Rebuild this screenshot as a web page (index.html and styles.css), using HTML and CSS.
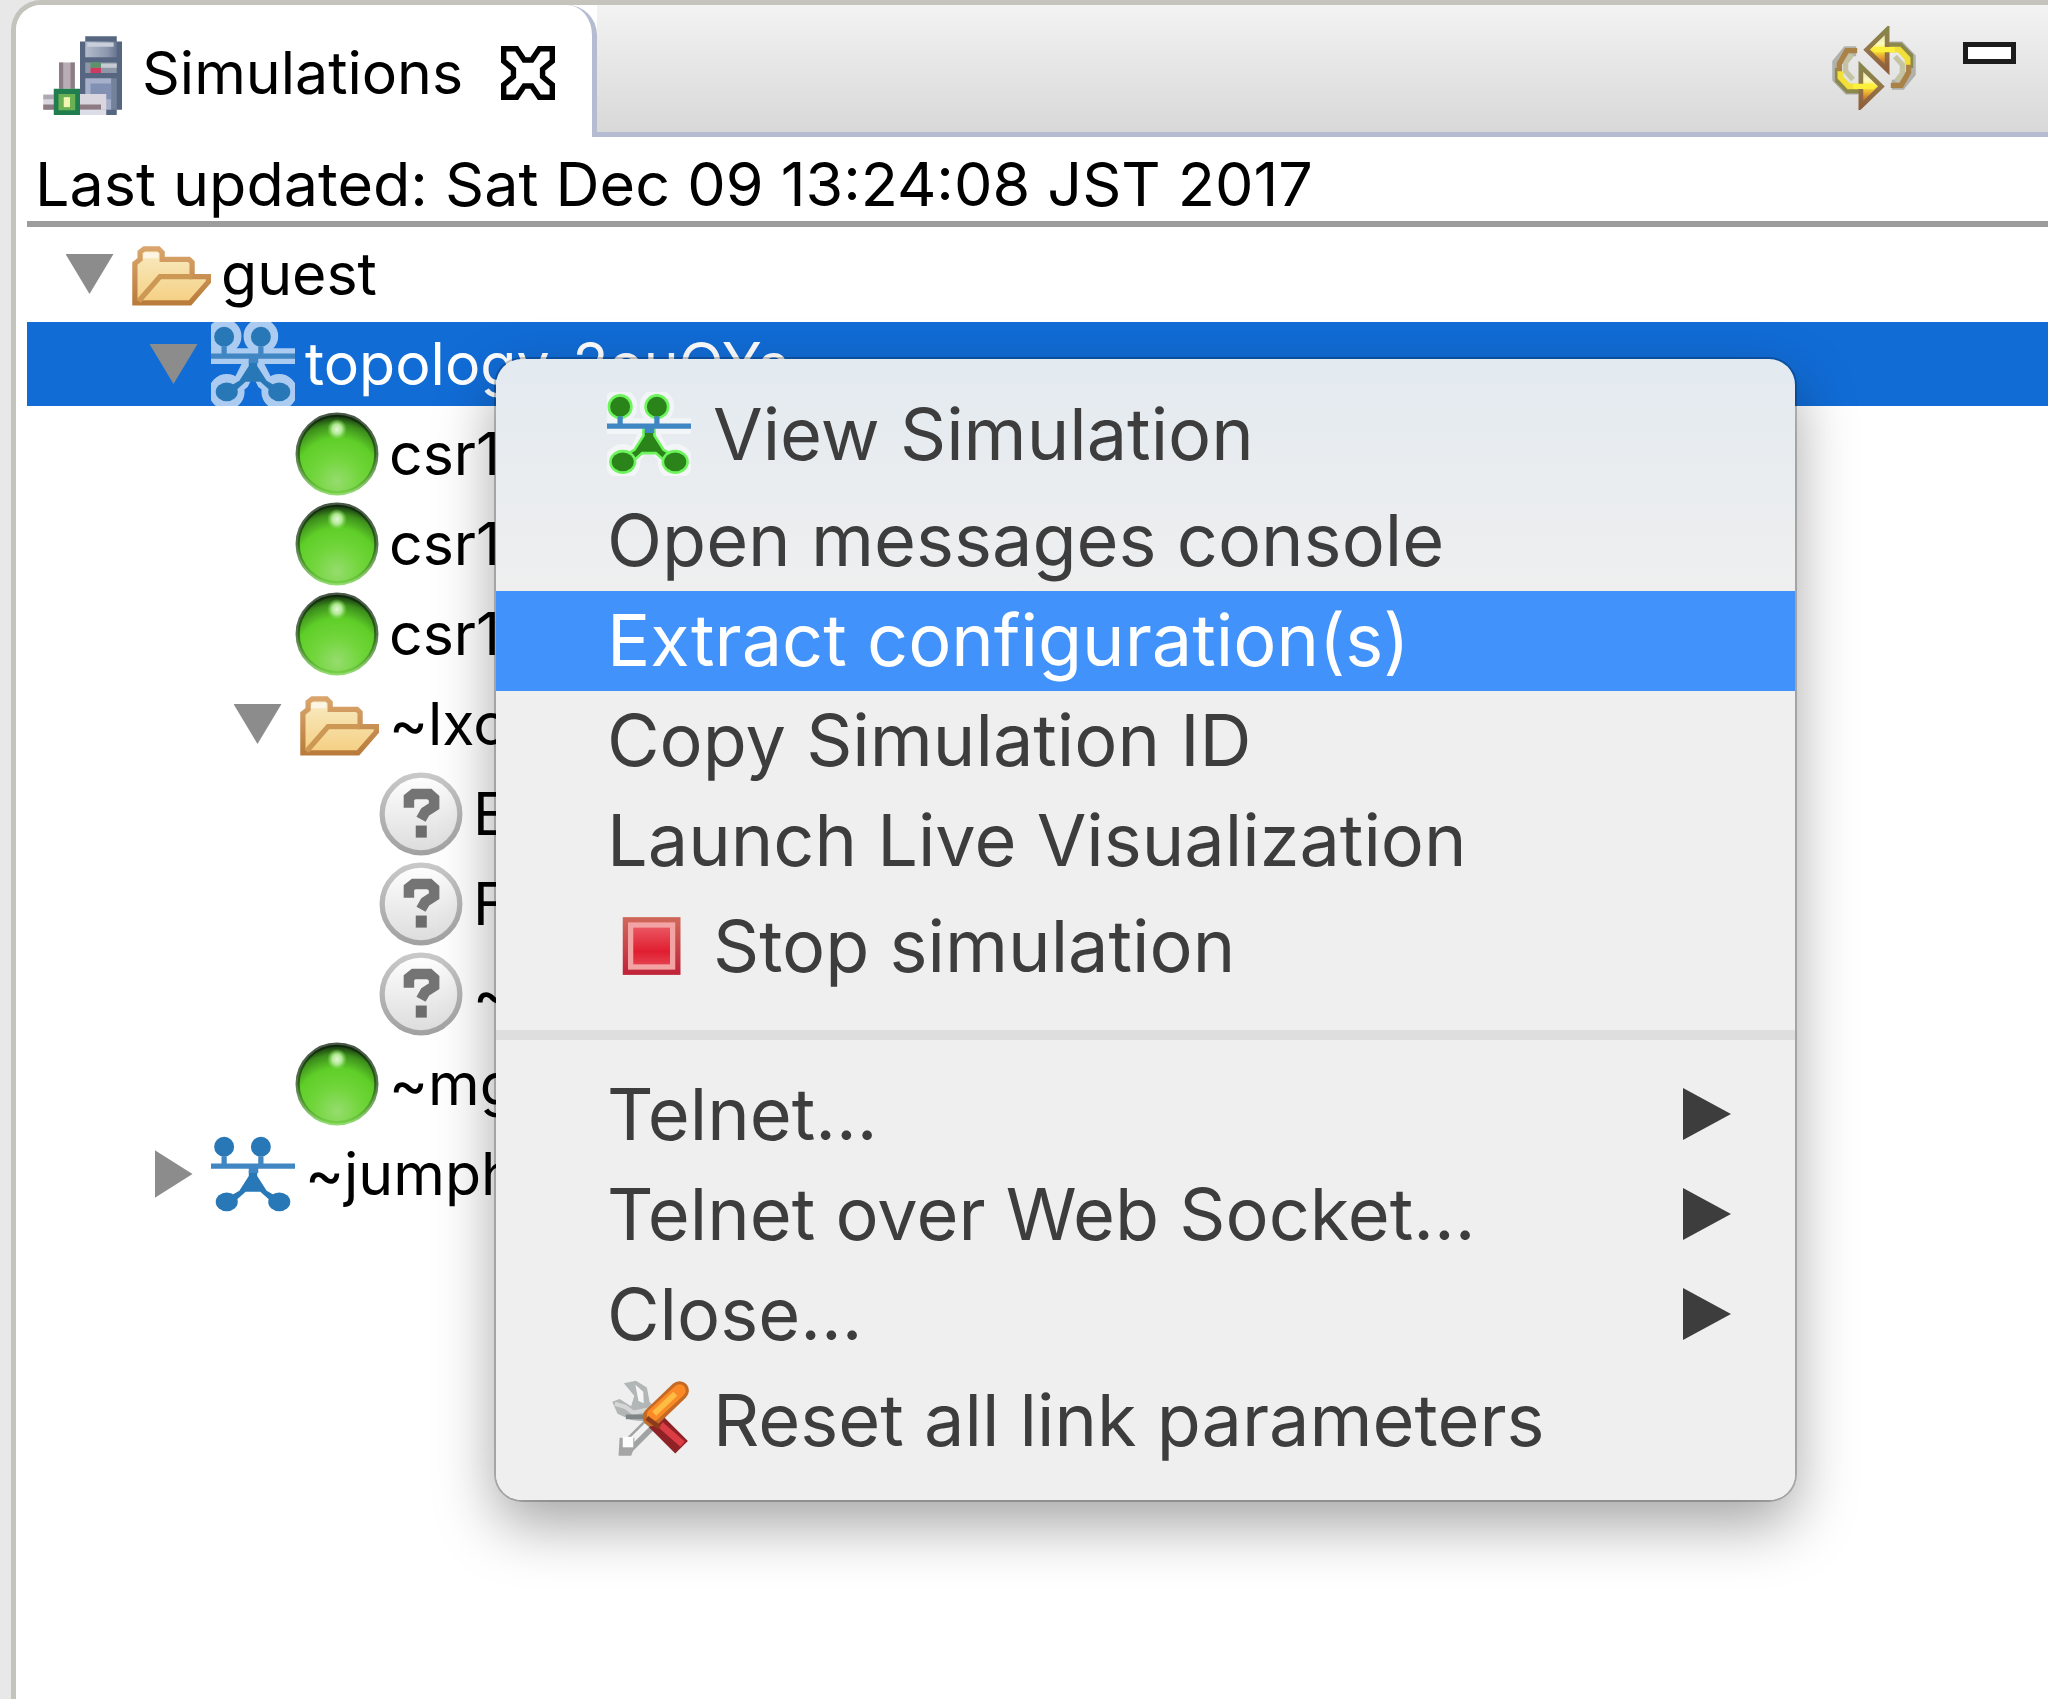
FILE: index.html
```
<!DOCTYPE html>
<html lang="en">
<head>
  <meta charset="UTF-8" />
  <title>Simulations</title>
  <link rel="stylesheet" href="styles.css">
</head>
<body>

  <!-- shared icons -->
  <svg class="sprite" aria-hidden="true">
    <defs>
      <radialGradient id="ballFill" cx="0.5" cy="0.85" r="0.85">
        <stop offset="0" stop-color="#96dc6e" />
        <stop offset="0.35" stop-color="#72d63c" />
        <stop offset="0.65" stop-color="#5fce28" />
        <stop offset="0.85" stop-color="#3d8f1c" />
        <stop offset="1" stop-color="#10280c" />
      </radialGradient>
      <radialGradient id="ballShine">
        <stop offset="0" stop-color="#e4f8d8" />
        <stop offset="0.5" stop-color="#aee890" />
        <stop offset="1" stop-color="#7fdc55" stop-opacity="0" />
      </radialGradient>
      <linearGradient id="ballEdge" x1="0" y1="0" x2="0" y2="1">
        <stop offset="0" stop-color="#0c200a" />
        <stop offset="0.5" stop-color="#1f4a14" />
        <stop offset="1" stop-color="#6fce42" />
      </linearGradient>
      <linearGradient id="grayFill" x1="0" y1="0" x2="0" y2="1">
        <stop offset="0" stop-color="#ffffff" />
        <stop offset="1" stop-color="#dcdcdc" />
      </linearGradient>
      <linearGradient id="grayEdge" x1="0" y1="0" x2="0" y2="1">
        <stop offset="0" stop-color="#c8c8c8" />
        <stop offset="1" stop-color="#a2a2a2" />
      </linearGradient>
      <linearGradient id="folderFill" x1="0" y1="0" x2="0" y2="1">
        <stop offset="0" stop-color="#f8ecc4" />
        <stop offset="1" stop-color="#f5cf82" />
      </linearGradient>
      <linearGradient id="folderEdge" x1="0" y1="0" x2="0" y2="1">
        <stop offset="0" stop-color="#d9a56c" />
        <stop offset="1" stop-color="#b97c3c" />
      </linearGradient>
      <linearGradient id="stopEdge" x1="0" y1="0" x2="0" y2="1">
        <stop offset="0" stop-color="#d0695a" />
        <stop offset="1" stop-color="#c02238" />
      </linearGradient>
      <linearGradient id="stopFill" x1="0" y1="0" x2="0" y2="1">
        <stop offset="0" stop-color="#ea5560" />
        <stop offset="0.65" stop-color="#e01e30" />
        <stop offset="1" stop-color="#e4404e" />
      </linearGradient>
      <linearGradient id="towerFill" x1="0" y1="0" x2="1" y2="0">
        <stop offset="0" stop-color="#b4bccd" />
        <stop offset="0.7" stop-color="#8c96ad" />
        <stop offset="1" stop-color="#69758f" />
      </linearGradient>
      <linearGradient id="arrowFill" x1="0" y1="0" x2="0" y2="1">
        <stop offset="0" stop-color="#d8d8a0" />
        <stop offset="0.35" stop-color="#fdfac0" />
        <stop offset="0.5" stop-color="#fdee3a" />
        <stop offset="0.75" stop-color="#dc8c2c" />
        <stop offset="1" stop-color="#8a5a38" />
      </linearGradient>
      <linearGradient id="arrowEdge" x1="0" y1="0" x2="0" y2="1">
        <stop offset="0" stop-color="#87864a" />
        <stop offset="0.5" stop-color="#94764a" />
        <stop offset="1" stop-color="#8f5f3c" />
      </linearGradient>
    </defs>

    <symbol id="icon-ball" viewBox="0 0 16 16">
      <circle cx="8" cy="8" r="7.5" fill="url(#ballFill)" stroke="url(#ballEdge)" stroke-width="0.8" stroke-opacity="0.75" />
      <ellipse cx="8" cy="3.3" rx="1.9" ry="2" fill="url(#ballShine)" />
    </symbol>

    <symbol id="icon-unknown" viewBox="0 0 16 16">
      <circle cx="8" cy="8" r="7.4" fill="url(#grayFill)" stroke="url(#grayEdge)" stroke-width="1" />
      <path d="M5.7 6.8V4.9L6.6 4.2H9.6L10.5 5V6.5L8.8 7.6 8 9" fill="none" stroke="#747474" stroke-width="2" />
      <path d="M7 10.2h2.1v2.3H7z" fill="#6c6c6c" />
    </symbol>

    <symbol id="icon-folder" viewBox="0 0 16 16">
      <path d="M1.5 13.5V6L2.5 5.2V3.8L3.3 3.2H6L6.7 3.9V5.2H11.8L12.4 5.8V8.5H15.5V9.5L12 13.5H1.5z" fill="url(#folderFill)" stroke="url(#folderEdge)" />
      <path d="M3.2 3.9H6V5H3z" fill="#fcf4e4" />
      <path d="M2.2 13.2L6.3 8.5H12.4" fill="none" stroke="#cc9854" />
    </symbol>

    <symbol id="icon-topology" viewBox="0 0 16 16">
      <g class="halo">
        <path d="M0 6.5H16M2.5 3V6M9.5 3V6M8 7L10.2 11.4L13 13.5M8 7L5.8 11.4L3 13.5" />
        <circle cx="2.5" cy="2.7" r="1.8" />
        <circle cx="9.5" cy="2.7" r="1.8" />
        <circle cx="3" cy="13.3" r="1.9" />
        <circle cx="13" cy="13.3" r="1.9" />
      </g>
      <g class="topo-node">
        <path d="M7.2 7.4H8.8V8.4L10.6 11.2 12 12 11 12.8 9.4 11.4H6.6L5 12.8 4 12 5.4 11.2 7.2 8.4z" />
        <circle cx="2.5" cy="2.8" r="1.9" />
        <circle cx="9.5" cy="2.8" r="1.9" />
        <ellipse cx="3" cy="13.3" rx="2.1" ry="1.8" />
        <ellipse cx="13" cy="13.3" rx="2.1" ry="1.8" />
      </g>
      <path d="M0 6h16v1H0zM2 4.6h1V6H2zM9 4.6h1V6H9zM7.2 7h1.8v0.8H7.2z" fill="#3f86c2" />
    </symbol>
  </svg>

  <main class="view">
    <header class="tab-bar">
      <div class="tab">
        <svg class="icon" viewBox="0 0 16 16" aria-hidden="true">
          <path d="M9 1h6v1h1v13h-1v1H9v-1H8V2h1z" fill="#566580" />
          <path d="M9 2h6v3H9z" fill="url(#towerFill)" />
          <path d="M9.4 2.2h5V3h-5z" fill="#c9cfdb" />
          <path d="M9 6h6v2H9z" fill="#8e97a8" />
          <path d="M12 6.2h3v0.8h-3z" fill="#c6cad2" />
          <path d="M10 6h2v1h-2z" fill="#5b9468" />
          <path d="M10 7h2v1h-2z" fill="#cf3a60" />
          <path d="M9 9h5v6H9z" fill="#a6b0ca" />
          <path d="M10 10h4v3h-4z" fill="#8290b4" />
          <path d="M14 9h1v6h-1z" fill="#75809a" />
          <path d="M4 6h3v5H4z" fill="#b8adb5" />
          <path d="M4 6h0.8v5H4zM6.2 6H7v5h-0.8z" fill="#8b7c86" />
          <path d="M1 12h12v3H1z" fill="#d9d6df" />
          <path d="M1 12.2h2V13H1z" fill="#b0a8b0" />
          <path d="M1 14h11v1H1z" fill="#8d7a82" />
          <path d="M8 15h5v1H8z" fill="#dcdde6" />
          <path d="M3 11h5v5H3z" fill="#1f7d4e" />
          <path d="M3.9 12h3.2v3.1H3.9z" fill="#6bb052" />
          <path d="M4.9 12.6h1.2v1.9H4.9z" fill="#f1f7b2" />
        </svg>
        <span class="tab-title">Simulations</span>
        <button class="tool-btn" type="button" aria-label="Close view">
          <svg class="close-icon" viewBox="0 0 10 10" aria-hidden="true">
            <path d="M0.5 0.5H2.9L4.3 2.6H5.7L7.1 0.5H9.5V2.8L7.7 4.3V5.7L9.5 7.2V9.5H7.1L5.7 7.4H4.3L2.9 9.5H0.5V7.2L2.3 5.7V4.3L0.5 2.8z" fill="#fff" stroke="#000" />
          </svg>
        </button>
      </div>
      <div class="tools">
        <button class="tool-btn" type="button" aria-label="Refresh">
          <svg class="icon" viewBox="0 0 16 16" aria-hidden="true">
            <g fill="none">
              <path d="M11 3.9H13L15 6V9L13.2 11.2H11.4M5 12.1H3L1 10V7L2.8 4.8H4.6" stroke="#9d9d98" stroke-width="1.9" stroke-opacity="0.75" />
              <path d="M12 5.8L13.4 7.4V9L12.2 10.6M4 10.2L2.6 8.6V7L3.8 5.4" stroke="#c4c4a4" stroke-width="1" />
              <path d="M10 3.7H13L14.9 5.6V8M6 12.3H3L1.1 10.4V8" stroke="#8b8a4c" stroke-width="1.1" />
              <path d="M14.6 7V8.8L13.2 11.3H11.2M1.4 9V7.2L2.8 4.7H4.8" stroke="#ab8246" stroke-width="1" />
              <path d="M9 4.5H12.8L14.4 6.2V7.4M7 11.5H3.2L1.6 9.8V8.6" stroke="#f2df3a" stroke-width="1.1" />
            </g>
            <path d="M10.5 0.7V8.3L6.6 4.5z" fill="url(#arrowFill)" stroke="url(#arrowEdge)" stroke-width="0.9" />
            <path d="M5.5 7.7V15.3L9.4 11.5z" fill="url(#arrowFill)" stroke="url(#arrowEdge)" stroke-width="0.9" />
            <path d="M8 4h4v1H8zM4 11h4v1H4z" fill="#fdf03c" />
          </svg>
        </button>
        <button class="tool-btn" type="button" aria-label="Minimize">
          <span class="minimize"></span>
        </button>
      </div>
    </header>

    <p class="status">Last updated: Sat Dec 09 13:24:08 JST 2017</p>

    <ul class="tree" role="tree">
      <li class="row" role="treeitem" aria-expanded="true">
        <button class="toggle open" type="button" aria-label="Collapse guest"></button>
        <svg class="icon"><use href="#icon-folder" /></svg>
        <span>guest</span>
      </li>
      <li class="row level-1 selected" role="treeitem" aria-expanded="true" aria-selected="true">
        <button class="toggle open" type="button" aria-label="Collapse topology"></button>
        <svg class="icon"><use href="#icon-topology" /></svg>
        <span>topology-2ouQYs</span>
      </li>
      <li class="row level-2" role="treeitem">
        <svg class="icon"><use href="#icon-ball" /></svg>
        <span>csr1</span>
      </li>
      <li class="row level-2" role="treeitem">
        <svg class="icon"><use href="#icon-ball" /></svg>
        <span>csr1</span>
      </li>
      <li class="row level-2" role="treeitem">
        <svg class="icon"><use href="#icon-ball" /></svg>
        <span>csr1</span>
      </li>
      <li class="row level-2" role="treeitem" aria-expanded="true">
        <button class="toggle open" type="button" aria-label="Collapse lxc"></button>
        <svg class="icon"><use href="#icon-folder" /></svg>
        <span>~lxc</span>
      </li>
      <li class="row level-3" role="treeitem">
        <svg class="icon"><use href="#icon-unknown" /></svg>
        <span>E</span>
      </li>
      <li class="row level-3" role="treeitem">
        <svg class="icon"><use href="#icon-unknown" /></svg>
        <span>F</span>
      </li>
      <li class="row level-3" role="treeitem">
        <svg class="icon"><use href="#icon-unknown" /></svg>
        <span>~</span>
      </li>
      <li class="row level-2" role="treeitem">
        <svg class="icon"><use href="#icon-ball" /></svg>
        <span>~mgmt</span>
      </li>
      <li class="row level-1" role="treeitem" aria-expanded="false">
        <button class="toggle" type="button" aria-label="Expand jumphost"></button>
        <svg class="icon"><use href="#icon-topology" /></svg>
        <span>~jumphost</span>
      </li>
    </ul>
  </main>

  <!-- context menu -->
  <div class="menu" role="menu">
    <button class="item with-icon" type="button" role="menuitem">
      <svg class="icon green"><use href="#icon-topology" /></svg>
      <span>View Simulation</span>
    </button>
    <button class="item" type="button" role="menuitem">Open messages console</button>
    <button class="item active" type="button" role="menuitem">Extract configuration(s)</button>
    <button class="item" type="button" role="menuitem">Copy Simulation ID</button>
    <button class="item" type="button" role="menuitem">Launch Live Visualization</button>
    <button class="item with-icon" type="button" role="menuitem">
      <svg class="icon" viewBox="0 0 16 16" aria-hidden="true">
        <rect x="3" y="2.5" width="11" height="11" fill="url(#stopEdge)" />
        <rect x="4" y="3.5" width="9" height="9" fill="#f4a3a4" />
        <rect x="5" y="4.5" width="7" height="7" fill="url(#stopFill)" />
      </svg>
      <span>Stop simulation</span>
    </button>
    <hr class="separator">
    <button class="item submenu" type="button" role="menuitem" aria-haspopup="true">Telnet...</button>
    <button class="item submenu" type="button" role="menuitem" aria-haspopup="true">Telnet over Web Socket...</button>
    <button class="item submenu" type="button" role="menuitem" aria-haspopup="true">Close...</button>
    <button class="item with-icon" type="button" role="menuitem">
      <svg class="icon" viewBox="0 0 16 16" aria-hidden="true">
        <path d="M3.2 1L5.5 0.5 7.6 1.8 8.1 4.5 9.6 6.2 7.2 8.3 4.6 8 2 6.8 1 4.5 2.4 4 4.6 5.4 5.2 3.4z" fill="#b3b6b6" />
        <path d="M5.4 1.3L6.9 2.6 7 4.8 6 4.4z" fill="#f6f6f6" />
        <path d="M1.5 4.9L3.5 5.5 5 6.6 8 6" fill="none" stroke="#d5d7d7" stroke-width="0.8" />
        <path d="M3.6 7.4L7.4 7.4" stroke="#7f8585" stroke-width="0.9" />
        <path d="M8.4 8.6L3.4 13.6" stroke="#a0a3a3" stroke-width="2.6" />
        <path d="M7.6 9L4 12.6" stroke="#f2f2f2" stroke-width="1.1" />
        <path d="M2.4 11.4H5.2V13.2L4.6 14.8H2.2z" fill="#a5a5a5" />
        <path d="M3 11.2h2v2H3z" fill="#fdfdfd" />
        <path d="M9.2 8.2L14.2 13.2" stroke="#8f2226" stroke-width="3.4" />
        <path d="M10.2 8.9L14.4 12.6" stroke="#dc3c44" stroke-width="1.3" />
        <path d="M8.6 7.4L13.8 2.4" stroke="#c46a24" stroke-width="3.6" stroke-linecap="round" />
        <path d="M8.8 7L13.8 2.4" stroke="#fb8a26" stroke-width="2.4" stroke-linecap="round" />
        <path d="M9 6.8L13 3" stroke="#fdbd45" stroke-width="1.1" />
        <path d="M7.6 7.6L10 9.4" stroke="#8c3c1a" stroke-width="0.9" />
      </svg>
      <span>Reset all link parameters</span>
    </button>
  </div>

</body>
</html>
```
FILE: styles.css
```
* {
  box-sizing: border-box;
}
body {
  margin: 0;
  padding-left: 11px;
  min-height: 100vh;
  display: flex;
  background: #e8e8e8;
  font-family: Inter, "Liberation Sans", sans-serif;
  font-size: 59px;
  line-height: 84px;
  color: #000;
  overflow: hidden;
}
button {
  border: none;
  background: none;
  padding: 0;
  font: inherit;
  color: inherit;
  text-align: left;
}
.sprite {
  position: absolute;
  width: 0;
  height: 0;
}
.icon {
  width: 84px;
  height: 84px;
  flex: none;
}

/* view */
.view {
  flex: 1;
  min-width: 0;
  background: #fff;
  border-left: 5px solid #c4c4bd;
  border-top: 5px solid #c4c4bd;
  border-top-left-radius: 30px;
}
.tab-bar {
  display: flex;
  height: 132px;
}
.tab {
  display: flex;
  align-items: center;
  padding: 4px 37px 0 22px;
  border-right: 5px solid #b5bbd0;
  border-radius: 25px 30px 0 0;
  background: #fff;
}
.tab-title {
  margin: 0 38px 0 20px;
}
.close-icon {
  display: block;
  width: 54px;
  height: 54px;
}
.tools {
  flex: 1;
  display: flex;
  align-items: flex-start;
  justify-content: flex-end;
  gap: 47px;
  padding: 21px 32px 0 0;
  border-bottom: 5px solid #b5bbd0;
  background: linear-gradient(#f3f3f3, #d8d8d8);
}
.tools .icon {
  display: block;
}
.minimize {
  display: block;
  width: 53px;
  height: 22px;
  margin-top: 16px;
  border: 5px solid #1c1c1c;
  background: #fff;
}
.status {
  margin: 0 0 0 11px;
  padding: 10px 0 0 8px;
  border-bottom: 6px solid #9c9c9c;
  font-size: 61px;
  line-height: 74px;
}

/* tree */
.tree {
  list-style: none;
  margin: 0 0 0 11px;
  padding: 5px 0 0;
  display: flex;
  flex-direction: column;
  gap: 6px;
}
.row {
  display: flex;
  height: 84px;
  padding-left: 100px;
}
.row span {
  margin-left: 10px;
}
.level-1 {
  padding-left: 184px;
}
.level-2 {
  padding-left: 268px;
}
.level-3 {
  padding-left: 352px;
}
.selected {
  background: #116cd6;
  color: #fff;
}
.toggle {
  display: flex;
  align-items: center;
  justify-content: center;
  width: 75px;
  margin-left: -75px;
}
.toggle::before {
  content: "";
  width: 38px;
  height: 48px;
  background: #8c8c8c;
  clip-path: polygon(0 0, 100% 50%, 0 100%);
}
.toggle.open::before {
  width: 48px;
  height: 40px;
  clip-path: polygon(0 0, 100% 0, 50% 100%);
}

/* topology icon, colours come from the place where it is used */
.halo {
  fill: #fff;
  stroke: #fff;
  stroke-width: 3;
  opacity: var(--halo, 0);
}
.topo-node {
  fill: var(--node, #2878b8);
  stroke: var(--node-glow, none);
  stroke-width: 1;
  paint-order: stroke;
}
.selected {
  --halo: 0.65;
}
.green {
  --halo: 0.5;
  --node: #2a8419;
  --node-glow: #6ef55e;
}

/* context menu */
.menu {
  position: absolute;
  top: 359px;
  left: 496px;
  width: 1299px;
  padding: 20px 0 23px;
  border-radius: 26px;
  background: linear-gradient(#e3eaf0, #efefef 240px);
  box-shadow: 0 0 0 2px rgba(0, 0, 0, 0.22), 0 24px 60px rgba(0, 0, 0, 0.36);
  color: #3d3d3d;
  font-size: 72px;
}
.item {
  display: flex;
  align-items: center;
  width: 100%;
  height: 100px;
  padding: 0 64px 2px 111px;
}
.with-icon {
  height: 112px;
  gap: 22px;
}
.active {
  background: #4193fb;
  color: #fff;
}
.submenu {
  justify-content: space-between;
}
.submenu::after {
  content: "";
  width: 48px;
  height: 52px;
  background: #3d3d3d;
  clip-path: polygon(0 0, 100% 50%, 0 100%);
}
.separator {
  height: 10px;
  margin: 27px 0 25px;
  border: none;
  background: #dedede;
}
```
